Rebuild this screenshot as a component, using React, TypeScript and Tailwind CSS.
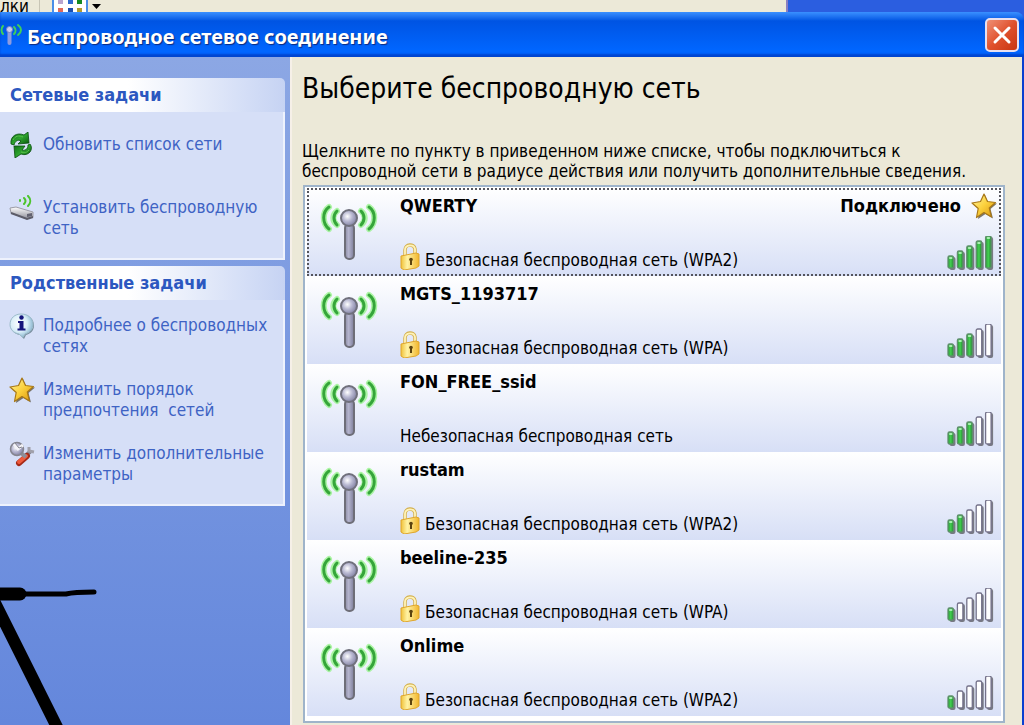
import type { ReactNode } from 'react'

type Network = {
  ssid: string
  security: string
  secured: boolean
  signal: number
  connected?: boolean
}

const networks: Network[] = [
  { ssid: 'QWERTY', security: 'Безопасная беспроводная сеть (WPA2)', secured: true, signal: 5, connected: true },
  { ssid: 'MGTS_1193717', security: 'Безопасная беспроводная сеть (WPA)', secured: true, signal: 3 },
  { ssid: 'FON_FREE_ssid', security: 'Небезопасная беспроводная сеть', secured: false, signal: 3 },
  { ssid: 'rustam', security: 'Безопасная беспроводная сеть (WPA2)', secured: true, signal: 2 },
  { ssid: 'beeline-235', security: 'Безопасная беспроводная сеть (WPA)', secured: true, signal: 1 },
  { ssid: 'Onlime', security: 'Безопасная беспроводная сеть (WPA2)', secured: true, signal: 1 },
]

// Gradients shared by all icons
function IconDefs() {
  return (
    <svg className="absolute h-0 w-0" aria-hidden="true">
      <defs>
        <linearGradient id="metal" x1="0" x2="1">
          <stop offset="0" stopColor="#8d8da6" />
          <stop offset="0.4" stopColor="#b4b4cd" />
          <stop offset="1" stopColor="#7d7d9a" />
        </linearGradient>
        <radialGradient id="ball" cx="0.4" cy="0.4" r="0.6">
          <stop offset="0" stopColor="#ffffff" />
          <stop offset="0.5" stopColor="#b9b9d2" />
          <stop offset="1" stopColor="#8585a5" />
        </radialGradient>
        <linearGradient id="gold" x1="0" x2="1" y1="0" y2="1">
          <stop offset="0" stopColor="#fff6a0" />
          <stop offset="0.5" stopColor="#fbd03c" />
          <stop offset="1" stopColor="#d8920c" />
        </linearGradient>
        <linearGradient id="lock" x1="0" x2="1">
          <stop offset="0" stopColor="#f0c23a" />
          <stop offset="0.35" stopColor="#fff3a4" />
          <stop offset="1" stopColor="#f2b62c" />
        </linearGradient>
        <linearGradient id="bar" x1="0" x2="1">
          <stop offset="0" stopColor="#2a9c37" />
          <stop offset="0.5" stopColor="#43cf50" />
          <stop offset="1" stopColor="#1f8a2d" />
        </linearGradient>
        <radialGradient id="bubble" cx="0.4" cy="0.4" r="0.6">
          <stop offset="0" stopColor="#ffffff" />
          <stop offset="0.6" stopColor="#d9eef8" />
          <stop offset="1" stopColor="#8fb9d2" />
        </radialGradient>
        <linearGradient id="leaf" x1="0" x2="1" y1="0" y2="1">
          <stop offset="0" stopColor="#0a6a10" />
          <stop offset="0.5" stopColor="#2fa52f" />
          <stop offset="1" stopColor="#06540a" />
        </linearGradient>
        <linearGradient id="device" x1="0" x2="0" y1="0" y2="1">
          <stop offset="0" stopColor="#ffffff" />
          <stop offset="1" stopColor="#8e8e98" />
        </linearGradient>
      </defs>
    </svg>
  )
}

function AntennaIcon() {
  return (
    <svg viewBox="0 0 60 60" className="h-[60px] w-[60px]" fill="none" aria-hidden="true">
      <g stroke="#7df46c" strokeWidth="6" strokeLinecap="round" opacity="0.6">
        <path d="M10 6C3 11 3 22 10 28M50 6C57 11 57 22 50 28" />
        <path d="M18 10C13 14 13 20 18 24M42 10C47 14 47 20 42 24" />
      </g>
      <g stroke="#35a53a" strokeWidth="3" strokeLinecap="round">
        <path d="M10 6C3 11 3 22 10 28M50 6C57 11 57 22 50 28" />
        <path d="M18 10C14 14 14 20 18 24M42 10C46 14 46 20 42 24" />
      </g>
      <rect x="26" y="23" width="9" height="35" rx="4" fill="url(#metal)" stroke="#6e6e78" strokeWidth="2" />
      <circle cx="30" cy="17" r="8" fill="url(#ball)" stroke="#70707c" strokeWidth="2" />
    </svg>
  )
}

function TitleIcon() {
  return (
    <svg viewBox="0 0 24 24" className="h-6 w-6 shrink-0" fill="none" aria-hidden="true">
      <g stroke="#3fd05a" strokeWidth="2" strokeLinecap="round">
        <path d="M3 3C1 5 1 9 3 11" />
        <path d="M14 4C16 6 16 9 14 11M18 2C22 5 22 9 18 12" />
      </g>
      <path d="M9.500 9V20" stroke="#8d9be0" strokeWidth="4" strokeLinecap="round" />
      <circle cx="9.500" cy="6.500" r="3" fill="#c8cdf0" stroke="#7480c8" />
    </svg>
  )
}

function LockIcon() {
  return (
    <svg viewBox="0 0 20 27" className="h-[27px] w-5 shrink-0" fill="none" aria-hidden="true">
      <path d="M5 13V7C5 1 14 0 15 6V12" stroke="#d3b050" strokeWidth="3.500" />
      <path d="M5 13V7C5 1.500 14 0.500 15 6V12" stroke="#fff3b8" strokeWidth="1.800" />
      <path d="M1 13L16 10L19 11V23L16 25L4 27L1 25Z" fill="url(#lock)" stroke="#dfa62c" />
      <path d="M11 16V22" stroke="#5c4310" strokeWidth="2" />
      <circle cx="11" cy="16.500" r="1.800" fill="#5c4310" />
    </svg>
  )
}

function StarIcon() {
  return (
    <svg viewBox="0 0 26 26" className="h-[26px] w-[26px] shrink-0" aria-hidden="true">
      <path d="M14 2L17.500 10L26 10.500L19.500 16L22 25.500L14.500 21L7 26L8.500 16.500L2 11L10 10Z" fill="#5d5648" opacity="0.8" />
      <path
        d="M13 1L16.500 8.500L24.500 9.500L18.300 15L20.500 24L13 19.500L5.500 24.500L7.200 15.500L1 10L9.500 8.500Z"
        fill="url(#gold)"
        stroke="#a87818"
        strokeWidth="1.200"
        strokeLinejoin="round"
      />
    </svg>
  )
}

function SignalIcon({ level }: { level: number }) {
  return (
    <svg viewBox="0 0 48 34" className="h-[34px] w-12" aria-hidden="true">
      {[0, 1, 2, 3, 4].map((i) => {
        const height = 13 + i * 5
        const x = 1 + i * 9.4
        const on = i < level
        return (
          <g key={i}>
            <rect x={x + 1.5} y={34 - height} width="6" height={height} rx="2" fill="#55555c" opacity="0.75" />
            <rect
              x={x}
              y={33 - height}
              width="5.500"
              height={height - 1}
              rx="1.500"
              fill={on ? 'url(#bar)' : '#ffffff'}
              stroke={on ? '#5f8f6c' : '#74728a'}
              strokeWidth="1.300"
            />
            {on && <rect x={x + 1} y={34 - height} width="3.500" height="2" rx="1" fill="#a8eeb0" />}
          </g>
        )
      })}
    </svg>
  )
}

function RefreshIcon() {
  return (
    <svg viewBox="0 0 26 26" className="h-[26px] w-[26px] shrink-0" aria-hidden="true">
      <g fill="url(#leaf)" stroke="#064d0a" strokeWidth="0.800" strokeLinejoin="round">
        <path d="M2 12C1 4 8 0 15 3L19 0L20 11L9 12L12 9C9 7 6 9 5 13Z" />
        <path d="M21 12C25 17 20 25 12 22L6 26L5 14L16 14L13 18C16 19 19 17 19 13Z" />
      </g>
      <path d="M4 8C6 4 10 3 14 5M20 18C18 21 15 21 12 20" stroke="#5cc04c" fill="none" />
    </svg>
  )
}

function RouterIcon() {
  return (
    <svg viewBox="0 0 26 26" className="h-[26px] w-[26px] shrink-0" fill="none" aria-hidden="true">
      <g stroke="#4cc42c" strokeWidth="2" strokeLinecap="round">
        <path d="M11 5V6M15 3C17 5 17 7 15 9M19 1C22 4 22 8 19 11" />
      </g>
      <path d="M1 13L7 12L24 17V22L18 24L2 18Z" fill="url(#device)" stroke="#9c9ca6" />
      <path d="M2 18L18 24L24 22" stroke="#5c5c68" strokeWidth="2" />
      <path d="M18 19L23 18V21L18 22Z" fill="#626270" />
    </svg>
  )
}

function InfoIcon() {
  return (
    <svg viewBox="0 0 26 26" className="h-[26px] w-[26px] shrink-0" aria-hidden="true">
      <path d="M13 2C20 2 25 6 25 12.500C25 18 21 21 17 22L15 26L11 22C5 21 2 17 2 12.500C2 6 7 2 13 2Z" fill="#5f7785" opacity="0.8" />
      <path
        d="M12 1C19 1 24 5 24 11.500C24 17 20 20 16 21L14 24.500L10 21C4 20 1 16 1 11.500C1 5 6 1 12 1Z"
        fill="url(#bubble)"
        stroke="#9dbccb"
      />
      <circle cx="12.500" cy="4.500" r="2.200" fill="#15157c" />
      <path d="M9 8H14.500V15.500H16.500V17.500H8.500V15.500H10.500V10H9Z" fill="#15157c" />
    </svg>
  )
}

function ToolsIcon() {
  return (
    <svg viewBox="0 0 26 26" className="h-[26px] w-[26px] shrink-0" fill="none" aria-hidden="true">
      <path d="M16 15L22 10" stroke="#83838c" strokeWidth="4" />
      <path d="M20 6L20 10L25 11" stroke="#a0a0aa" strokeWidth="3" />
      <path d="M18 15L10 22" stroke="#a52a18" strokeWidth="6" strokeLinecap="round" />
      <path d="M17 15L10 21" stroke="#ef5a3c" strokeWidth="4" strokeLinecap="round" />
      <path d="M12 12L17 16" stroke="#8e8e98" strokeWidth="4" />
      <circle cx="8" cy="8" r="6.500" fill="url(#ball)" stroke="#85858f" strokeWidth="1.500" />
      <path d="M5 3L9 8L14 4" stroke="#f4f4f8" strokeWidth="3" />
      <path d="M6 2L10 7L13 6" stroke="#85858f" />
    </svg>
  )
}

function Task({ icon, children }: { icon: ReactNode; children: ReactNode }) {
  return (
    <a href="#" className="flex items-start gap-2 text-[17px] leading-[21px] text-[#3e63c4]">
      {icon}
      <span className="whitespace-pre-line pt-[2px]">{children}</span>
    </a>
  )
}

function TaskBox({ title, children }: { title: string; children: ReactNode }) {
  return (
    <section className="mr-[5px]">
      <h2 className="rounded-tr-[5px] bg-linear-to-r from-white from-45% to-[#c6d3f3] px-[10px] text-[18px] leading-[34px] font-bold text-[#2c58c0]">
        {title}
      </h2>
      <div className="border-r-2 border-b-2 border-[#eef2fd] bg-[#d6dff7] pl-[9px]">{children}</div>
    </section>
  )
}

function NetworkRow({ network }: { network: Network }) {
  return (
    <li className="flex h-[88px] bg-linear-to-b from-white to-[#d7dff6]">
      <button
        type="button"
        className={`flex w-full border-2 border-dotted pl-[10px] text-left ${network.connected ? 'border-[#55555c]' : 'border-transparent'}`}
      >
        <span className="mt-[11px]">
          <AntennaIcon />
        </span>
        <span className="ml-[21px] flex h-full flex-1 flex-col justify-between pt-1">
          <span className="text-[18px] leading-6 font-bold">{network.ssid}</span>
          <span className="flex h-[31px] items-start gap-[5px] text-[17px] leading-[34px]">
            {network.secured && <LockIcon />}
            {network.security}
          </span>
        </span>
        <span className="flex h-full flex-col items-end justify-between pt-[2px] pb-1">
          <span className="flex h-[28px] items-center gap-[10px] pr-[2px] text-[18px] leading-6 font-bold">
            {network.connected && (
              <>
                Подключено
                <StarIcon />
              </>
            )}
          </span>
          <span className="pr-1">
            <SignalIcon level={network.signal} />
          </span>
        </span>
      </button>
    </li>
  )
}

export default function App() {
  return (
    <div className="relative flex min-h-screen flex-col overflow-hidden bg-[#2b5ee0] font-['DejaVu_Sans_Condensed','DejaVu_Sans',sans-serif] text-black">
      <IconDefs />

      {/* strip of the window behind */}
      <div className="flex h-3">
        <div className="flex w-[77%] items-end border-r-2 border-[#8a7fc0] bg-[#ece9d8] text-[17px] leading-3">
          <span className="w-[39px]">лки</span>
          <span className="h-3 w-px bg-[#c8c5b5]" />
          <svg viewBox="0 0 52 12" className="ml-3 h-3 w-[52px]" aria-hidden="true">
            <path d="M2 0H35V12H2Z" fill="#ffffff" />
            <path d="M1 0V12M35 0V12" stroke="#4a8fe8" strokeWidth="2" />
            <path d="M6 0H11V4H6Z" fill="#b9a5cf" />
            <path d="M16 0H21V4H16Z" fill="#2f6bd0" />
            <path d="M25 0H30V4H25Z" fill="#148a22" />
            <path d="M6 8H11V12H6Z" fill="#e0695a" />
            <path d="M16 8H21V12H16Z" fill="#1d4fae" />
            <path d="M25 8H30V12H25Z" fill="#b39a30" />
            <path d="M40 4H49L44.500 9Z" fill="#000000" />
          </svg>
        </div>
      </div>

      <header className="flex h-[45px] items-center rounded-tr-lg bg-linear-to-b from-[#3a90ff] via-[#0054e3] via-20% to-[#0066ff] to-85% pr-[5px] shadow-[inset_0_-3px_2px_#0045d0]">
        <TitleIcon />
        <h1 className="ml-[3px] flex-1 pt-1 font-['Noto_Sans',sans-serif] text-[20px] font-bold text-white [text-shadow:1px_1px_1px_#0a2a80]">
          Беспроводное сетевое соединение
        </h1>
        <button
          type="button"
          aria-label="Закрыть"
          className="flex h-[34px] w-[34px] items-center justify-center rounded-[5px] border-2 border-[#e8e0f0] bg-linear-to-br from-[#ee8f75] via-[#e0512c] to-[#c83510]"
        >
          <svg viewBox="0 0 20 20" className="h-5 w-5" aria-hidden="true">
            <path d="M3 3L17 17M17 3L3 17" stroke="#ffffff" strokeWidth="3" strokeLinecap="round" />
          </svg>
        </button>
      </header>

      <div className="flex flex-1 border-r-2 border-[#0a3fd0]">
        <aside className="relative flex w-[290px] shrink-0 flex-col gap-[6px] bg-linear-to-b from-[#8ca7e4] to-[#6487dc] pt-[21px]">
          <TaskBox title="Сетевые задачи">
            <div className="flex flex-col gap-[37px] pt-5 pb-[19px]">
              <Task icon={<RefreshIcon />}>Обновить список сети</Task>
              <Task icon={<RouterIcon />}>{'Установить беспроводную\nсеть'}</Task>
            </div>
          </TaskBox>
          <TaskBox title="Родственные задачи">
            <div className="flex flex-col gap-5 pt-[13px] pb-[19px]">
              <Task icon={<InfoIcon />}>{'Подробнее о беспроводных\nсетях'}</Task>
              <Task icon={<StarIcon />}>{'Изменить порядок\nпредпочтения\u00a0 сетей'}</Task>
              <Task icon={<ToolsIcon />}>{'Изменить дополнительные\nпараметры'}</Task>
            </div>
          </TaskBox>
          {/* marker strokes drawn over the pane */}
          <svg viewBox="0 0 100 140" className="absolute bottom-0 left-0 h-[140px] w-[100px]" fill="none" aria-hidden="true">
            <path d="M-6 9H20" stroke="#000000" strokeWidth="13" strokeLinecap="round" />
            <path d="M20 9H66C74 7 80 7 94 7" stroke="#000000" strokeWidth="5" strokeLinecap="round" />
            <path d="M-6 16L60 148" stroke="#000000" strokeWidth="12" />
          </svg>
        </aside>

        <main className="flex min-w-0 flex-1 flex-col border-l-2 border-[#f6f0e8] bg-[#ece9d8] pr-[17px] pb-[2px] pl-[10px]">
          <h2 className="pt-4 text-[28px] leading-8">Выберите беспроводную сеть</h2>
          <p className="mt-9 text-[17px] leading-5">
            Щелкните по пункту в приведенном ниже списке, чтобы подключиться к<br />
            беспроводной сети в радиусе действия или получить дополнительные сведения.
          </p>
          <ul className="mt-1 ml-px border-2 border-[#9fb4ca] bg-white px-[2px] pt-px pb-[5px]">
            {networks.map((network) => (
              <NetworkRow key={network.ssid} network={network} />
            ))}
          </ul>
        </main>
      </div>
    </div>
  )
}
